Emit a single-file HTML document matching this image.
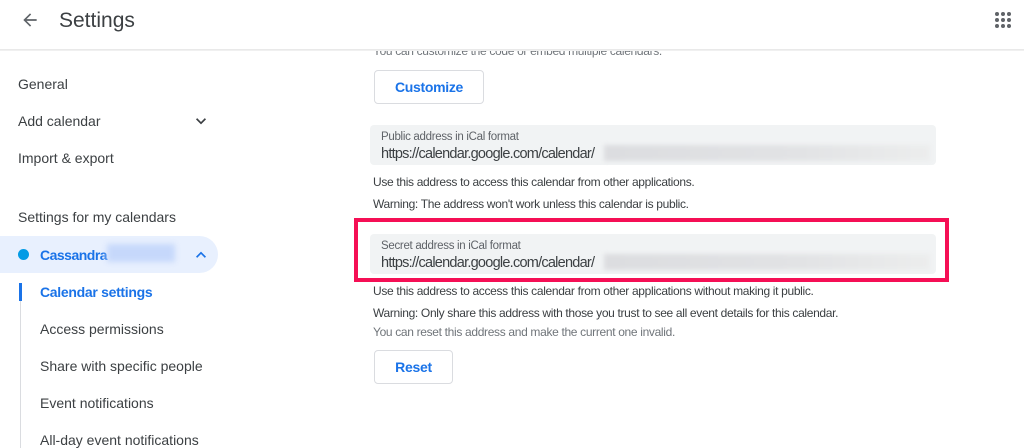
<!DOCTYPE html>
<html><head><style>
*{margin:0;padding:0;box-sizing:border-box}
body{width:1024px;height:448px;overflow:hidden;background:#fff;font-family:"Liberation Sans",Arial,sans-serif;position:relative;color:#3c4043}
.a{position:absolute;white-space:nowrap}
.side{font-size:14px;color:#3c4043}
.small{font-size:12px;color:#3c4043;letter-spacing:-0.33px}
.field{position:absolute;left:370px;width:566px;height:40px;background:#f1f3f4;border-radius:4px}
.field .l{position:absolute;left:11px;top:6px;font-size:11.5px;color:#5f6368;letter-spacing:-0.3px}
.field .u{position:absolute;left:11px;top:21px;font-size:14.5px;color:#3c4043;letter-spacing:-0.75px}
.field .b{position:absolute;left:234px;top:20px;width:326px;height:16px;background:linear-gradient(90deg,#dcdde0,#e2e3e5 60%,#eceded);filter:blur(2px)}
.btn{position:absolute;border:1px solid #dadce0;border-radius:4px;color:#1a73e8;font-size:14px;font-weight:bold;text-align:center;letter-spacing:-0.3px}
</style></head><body>
<svg class="a" style="left:20px;top:10px" width="20" height="20" viewBox="0 0 24 24"><path d="M20 11H7.8l5.6-5.6L12 4l-8 8 8 8 1.4-1.4L7.8 13H20z" fill="#5f6368"/></svg>
<div class="a" style="left:59px;top:9px;font-size:21px;color:#3c4043">Settings</div>
<svg class="a" style="left:994px;top:11px" width="18" height="18" viewBox="0 0 18 18" fill="#5f6368"><circle cx="3" cy="3" r="2"/><circle cx="9" cy="3" r="2"/><circle cx="15" cy="3" r="2"/><circle cx="3" cy="9" r="2"/><circle cx="9" cy="9" r="2"/><circle cx="15" cy="9" r="2"/><circle cx="3" cy="15" r="2"/><circle cx="9" cy="15" r="2"/><circle cx="15" cy="15" r="2"/></svg>
<div class="a" style="left:0;top:49px;width:1024px;height:2px;background:linear-gradient(#e6e6e6,#f4f4f4)"></div>

<div class="a side" style="left:18px;top:76px">General</div>
<div class="a side" style="left:18px;top:113px">Add calendar</div>
<svg class="a" style="left:191px;top:111px" width="20" height="20" viewBox="0 0 24 24"><path d="M7.4 8.6L12 13.2l4.6-4.6L18 10l-6 6-6-6z" fill="#3c4043"/></svg>
<div class="a side" style="left:18px;top:150px">Import &amp; export</div>
<div class="a side" style="left:18px;top:209px;font-weight:500;color:#3c4043">Settings for my calendars</div>
<div class="a" style="left:0;top:236px;width:218px;height:37px;background:#e8f0fe;border-radius:0 19px 19px 0"></div>
<div class="a" style="left:18px;top:249px;width:11px;height:11px;border-radius:50%;background:#039be5"></div>
<div class="a" style="left:40px;top:247px;font-size:14px;font-weight:bold;color:#1a73e8;letter-spacing:-0.5px">Cassandra</div>
<div class="a" style="left:107px;top:244px;width:68px;height:18px;background:#c6d8fb;filter:blur(3px)"></div>
<svg class="a" style="left:191px;top:245px" width="20" height="20" viewBox="0 0 24 24"><path d="M7.4 15.4L12 10.8l4.6 4.6L18 14l-6-6-6 6z" fill="#1a73e8"/></svg>
<div class="a" style="left:20px;top:283px;width:1px;height:165px;background:#dadce0"></div>
<div class="a" style="left:19px;top:283px;width:3px;height:18px;background:#1a73e8"></div>
<div class="a side" style="left:40px;top:284px;font-weight:bold;color:#1a73e8;letter-spacing:-0.3px">Calendar settings</div>
<div class="a side" style="left:40px;top:321px">Access permissions</div>
<div class="a side" style="left:40px;top:358px">Share with specific people</div>
<div class="a side" style="left:40px;top:395px">Event notifications</div>
<div class="a side" style="left:40px;top:432px">All-day event notifications</div>

<div class="a small" style="left:373px;top:44px;color:#70757a">You can customize the code or embed multiple calendars.</div>
<div class="a" style="left:350px;top:40px;width:674px;height:11px;background:#fff"></div>
<div class="a" style="left:350px;top:49px;width:674px;height:2px;background:linear-gradient(#e6e6e6,#f4f4f4)"></div>
<div class="btn" style="left:374px;top:70px;width:110px;height:34px;line-height:32px">Customize</div>
<div class="field" style="top:125px"><div class="l">Public address in iCal format</div><div class="u">https://calendar.google.com/calendar/</div><div class="b"></div></div>
<div class="a small" style="left:373px;top:175px">Use this address to access this calendar from other applications.</div>
<div class="a small" style="left:373px;top:197px">Warning: The address won't work unless this calendar is public.</div>
<div class="field" style="top:234px"><div class="l">Secret address in iCal format</div><div class="u">https://calendar.google.com/calendar/</div><div class="b"></div></div>
<div class="a" style="left:354px;top:218px;width:595px;height:64px;border:4px solid #f50f55"></div>
<div class="a small" style="left:373px;top:284px">Use this address to access this calendar from other applications without making it public.</div>
<div class="a small" style="left:373px;top:306px">Warning: Only share this address with those you trust to see all event details for this calendar.</div>
<div class="a small" style="left:373px;top:325px;color:#70757a">You can reset this address and make the current one invalid.</div>
<div class="btn" style="left:374px;top:350px;width:79px;height:34px;line-height:32px">Reset</div>
</body></html>
